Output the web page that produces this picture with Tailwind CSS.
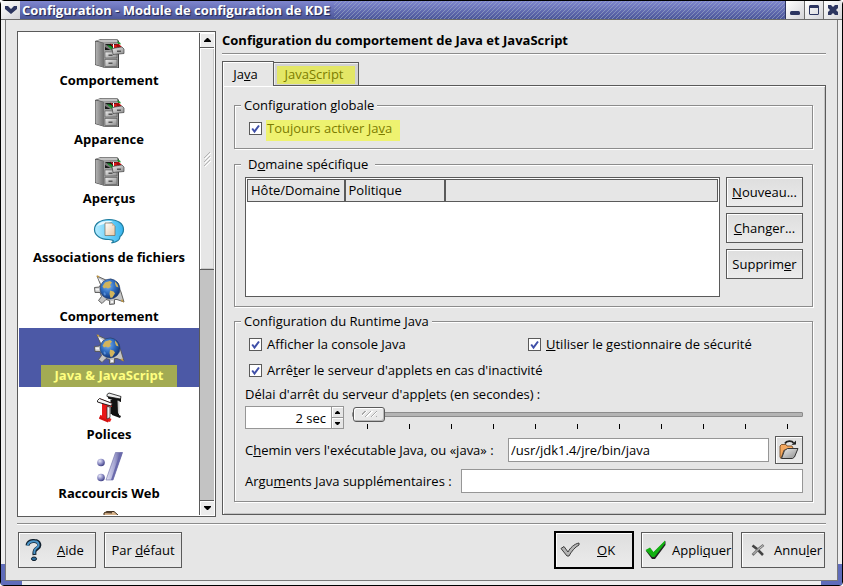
<!DOCTYPE html>
<html lang="fr">
<head>
<meta charset="utf-8">
<title>Configuration - Module de configuration de KDE</title>
<script src="https://cdn.jsdelivr.net/npm/@tailwindcss/browser@4"></script>
</head>
<body class="h-screen overflow-hidden bg-white font-['Open_Sans','Noto_Sans',sans-serif] text-[13px] leading-4 text-black">
<svg class="absolute size-0" aria-hidden="true">
  <defs>
    <linearGradient id="side" x1="0" x2="1"><stop offset="0" stop-color="#b4b4b4"/><stop offset="1" stop-color="#6e6e6e"/></linearGradient>
    <linearGradient id="front" x1="0" x2="1" y1="0" y2="1"><stop offset="0" stop-color="#eee"/><stop offset="1" stop-color="#8c8c8c"/></linearGradient>
    <linearGradient id="bubble" x1="0" x2="1"><stop offset="0" stop-color="#b8ecff"/><stop offset=".5" stop-color="#6cd2fb"/><stop offset="1" stop-color="#38b4ee"/></linearGradient>
    <linearGradient id="page" x1="0" x2="1" y1="0" y2="1"><stop offset="0" stop-color="#fff"/><stop offset="1" stop-color="#e9c8a4"/></linearGradient>
    <radialGradient id="globe" cx=".4" cy=".35" r=".7"><stop offset="0" stop-color="#7db4ee"/><stop offset=".5" stop-color="#2f6cc0"/><stop offset="1" stop-color="#0d2c6a"/></radialGradient>
    <linearGradient id="slash" x1="0" x2="1"><stop offset="0" stop-color="#e4e4f4"/><stop offset=".5" stop-color="#a8a8d4"/><stop offset="1" stop-color="#4a4a90"/></linearGradient>
    <radialGradient id="ball" cx=".35" cy=".3" r=".8"><stop offset="0" stop-color="#e8e8f8"/><stop offset=".5" stop-color="#8c8cc4"/><stop offset="1" stop-color="#2c2c74"/></radialGradient>
    <pattern id="stripes" width="4" height="4" patternUnits="userSpaceOnUse"><path d="M3 0h1v1h-1zM2 1h1v1h-1zM1 2h1v1h-1zM0 3h1v1h-1z" fill="#a4b4c8" fill-opacity=".55" shape-rendering="crispEdges"/></pattern>
  </defs>
  <symbol id="cabinet" viewBox="0 0 32 32">
    <path d="M2 3 L8 1 L24 1 L26 3 L26 30 L12 30 L2 27Z" fill="#444"/>
    <path d="M2.500 3.500 L11 5 L11 29.500 L2.500 26.500Z" fill="url(#side)"/>
    <path d="M3 2.800 L8.500 1.500 L24 1.500 L25 4.500 L11 4.800Z" fill="#c2c2c2"/>
    <path d="M11 5 H25 V29.500 H11Z" fill="#a0a0a0"/>
    <path d="M12 6 H24 V12 H12Z" fill="#181818"/>
    <rect x="12" y="14" width="12" height="6" fill="url(#front)" stroke="#555" stroke-width=".6"/>
    <rect x="12" y="21.500" width="12" height="7" fill="url(#front)" stroke="#555" stroke-width=".6"/>
    <path d="M15.500 16.500h4v1.500h-4zM15.500 24.500h4v1.500h-4z" fill="#555"/>
    <path d="M12 6l9 6v2l-9-5z" fill="#777"/>
    <path d="M17 5l3 2 6-1 3 3-8 1z" fill="#e11a1a"/>
    <path d="M14 7l4 1 3 3-2 1zM24 3.500l3 1 1 2-3-1z" fill="#159c28"/>
    <path d="M23 6l3 .5 2 2.500-4 .5z" fill="#a00c0c"/>
    <path d="M20 6h1v4h-1z" fill="#fff"/>
    <path d="M19 10.500 L29 9 L31 11 L31 15.500 L20 16.500Z" fill="url(#front)" stroke="#444" stroke-width=".7"/>
    <path d="M24 12.500h4v1.500h-4z" fill="#555"/>
  </symbol>
  <symbol id="speech" viewBox="0 0 32 32">
    <path d="M16 4.500C7.500 4.500 1.500 8.800 1.500 14.500S7.500 24.500 16 24.500C20 25 22 25.500 18.500 28C24 27 27 24.500 27 21.500C29.500 19.500 30.500 17 30.500 14.500C30.500 8.800 24.500 4.500 16 4.500Z" fill="url(#bubble)" stroke="#1f7c9e" stroke-width="1.200"/>
    <path d="M4 11C7 6 14 5.500 20 6.500L13 8.500Z" fill="#e4f8ff"/>
    <path d="M12 8h7l3 3v9.500H12z" fill="url(#page)" stroke="#7a6a58" stroke-width=".7"/>
    <path d="M19 8v3h3z" fill="#d8c4ae"/>
  </symbol>
  <symbol id="gearglobe" viewBox="0 0 32 32">
    <path d="M4 2L14 6.500 18 5 21 7 25 9 26 14 28 18 31 28 24 25.500 21.500 25.500 21.500 30 16.500 30.500 16.500 26.500 13 25.500 9 29.500 5.500 26.500 8.500 22.500 7 18.500 2 18.500 1.500 13.500 6.500 13 7.500 10.500Z" fill="#c4c4c4" stroke="#555" stroke-width=".9"/>
    <path d="M5 4l5 3-1.500 3zM2.500 14.500h4v2h-4zM18 27h2v2h-2z" fill="#f4f4f4"/>
    <path d="M3.500 1.500l3 .5-1.500 2zM29 25l2 3.500-3-1.500z" fill="#c89a3c"/>
    <circle cx="17" cy="15" r="10" fill="url(#globe)" stroke="#223a6a" stroke-width=".6"/>
    <path d="M12 8.500l5-1.500 2 1.500-2 2.500 1 2-3 1.500-2-1-2 1-1.500-2zM17 16.500l3.500 1 1.500 2-2.500 4-2 .5-1-4zM22 7.500l2.500 3 1 3-2.500-1-1-3z" fill="#d2b45c"/>
    <path d="M11 18l2 2-1 2-1.500-2z" fill="#5a8fd6"/>
  </symbol>
  <symbol id="fonts" viewBox="0 0 32 32">
    <path d="M15 2.500L28 5.500 28 10 26 9.500V23l2 1-1 2-8-3v-3l2 .5V8.500L15 6.500Z" fill="#111"/>
    <path d="M17.500 8h6v15l-6-1z" fill="#111"/>
    <path d="M14 2.500L16 1 28 4.500 27.500 7 14 4.500Z" fill="#eee" stroke="#111" stroke-width=".8"/>
    <path d="M24.500 8.500l2 .5v13l-1.500-.5z" fill="#ccc"/>
    <path d="M5 8L7 6.500 19 11V15L16.500 14V26l2 1-1.500 3-10-4v-3l2 .5V11.500L5 10Z" fill="#e81818"/>
    <path d="M4.500 8.500L6.500 6.500 19.500 11.500 18 14 4.500 10Z" fill="#f4f4f4" stroke="#111" stroke-width=".9"/>
    <path d="M14 14.500l3 .5V25.500l-3 1.500z" fill="#f2f2f2" stroke="#222" stroke-width=".7"/>
    <path d="M6.500 24.500l9.500 4-1 2-9-3.800z" fill="#d21010"/>
  </symbol>
  <symbol id="webkeys" viewBox="0 0 32 32">
    <path d="M22.500 1.500H29.500L20 29H13Z" fill="url(#slash)" stroke="#6a6aa4" stroke-width=".6"/>
    <path d="M27 1.500h2.500L20 29h-2z" fill="#6a6aac"/>
    <circle cx="8" cy="11.500" r="3.800" fill="url(#ball)"/><circle cx="8" cy="26.500" r="3.800" fill="url(#ball)"/>
  </symbol>
  <symbol id="tick" viewBox="0 0 13 13"><path d="M3.200 6.500L5.500 9.500L10 3.500" fill="none" stroke="#3f4fa8" stroke-width="2"/></symbol>
</svg>

<div class="relative flex h-full flex-col rounded-sm border border-black bg-[#eeeeee]">
  <header class="relative z-10 flex h-[19px] shrink-0 items-stretch overflow-hidden border-b border-[#6b6b6b] bg-linear-to-b from-[#7f86cf] to-[#4b5699]">
    <button aria-label="Menu de la fenêtre" class="grid w-[19px] shrink-0 place-items-center bg-linear-to-br from-white to-[#d4d4d8]">
      <svg class="h-2 w-3" viewBox="0 0 12 8"><path d="M0 0H3L6 3L9 0H12V3L6 8L0 3Z" fill="#2c3560"/></svg>
    </button>
    <h1 class="pr-1 pl-[2px] leading-[18px] font-bold whitespace-nowrap text-white [text-shadow:1px_1px_1px_#1c2450]">Configuration - Module de configuration de KDE</h1>
    <svg class="h-full min-w-0 flex-1" aria-hidden="true"><rect width="100%" height="100%" fill="url(#stripes)"/></svg>
    <div class="flex gap-px border-l border-[#2c3560] bg-[#6b6b6b]">
      <button aria-label="Réduire" class="grid w-[18px] place-items-center bg-linear-to-br from-white to-[#d4d4d8]"><svg class="size-3" viewBox="0 0 12 12"><rect x="1" y="7" width="10" height="4" rx="1.500" fill="#2c3560"/></svg></button>
      <button aria-label="Agrandir" class="grid w-[18px] place-items-center bg-linear-to-br from-white to-[#d4d4d8]"><svg class="size-3" viewBox="0 0 12 12"><path d="M2 1H10L11 2V10L10 11H2L1 10V2ZM2 4V10H10V4Z" fill="#2c3560" fill-rule="evenodd"/></svg></button>
      <button aria-label="Fermer" class="grid w-[18px] place-items-center bg-linear-to-br from-white to-[#d4d4d8]"><svg class="size-3" viewBox="0 0 12 12"><path d="M1 1H4L6 3L8 1H11V4L9 6L11 8V11H8L6 9L4 11H1V8L3 6L1 4Z" fill="#2c3560"/></svg></button>
    </div>
  </header>
  <div class="absolute bottom-0 left-0 size-[21px] bg-[#5f6cba]"></div>
  <div class="absolute right-0 bottom-0 size-[21px] bg-[#5f6cba]"></div>

  <div class="relative mx-1 mb-1 flex min-h-0 flex-1 flex-col border border-t-0 border-[#7a7a7a] bg-[#e6e6e6] p-[11px]">
    <main class="flex min-h-0 flex-1 gap-[6px]">
      <nav aria-label="Modules" class="flex w-[199px] shrink-0 border border-[#5a5a5a] bg-white p-px">
        <ul class="min-w-0 flex-1 overflow-hidden font-bold">
          <li><button class="flex h-[59px] w-full flex-col items-center pt-[5px]"><svg class="size-8"><use href="#cabinet"/></svg><span class="mt-[2px]">Comportement</span></button></li>
          <li><button class="flex h-[59px] w-full flex-col items-center pt-[5px]"><svg class="size-8"><use href="#cabinet"/></svg><span class="mt-[2px]">Apparence</span></button></li>
          <li><button class="flex h-[59px] w-full flex-col items-center pt-[5px]"><svg class="size-8"><use href="#cabinet"/></svg><span class="mt-[2px]">Aperçus</span></button></li>
          <li><button class="flex h-[59px] w-full flex-col items-center pt-[5px]"><svg class="size-8"><use href="#speech"/></svg><span class="mt-[2px]">Associations de fichiers</span></button></li>
          <li><button class="flex h-[59px] w-full flex-col items-center pt-[5px]"><svg class="size-8"><use href="#gearglobe"/></svg><span class="mt-[2px]">Comportement</span></button></li>
          <li><button aria-current="true" class="flex h-[59px] w-full flex-col items-center bg-[#4c59a6] pt-[5px]"><svg class="size-8 shrink-0"><use href="#gearglobe"/></svg><span class="w-[136px] bg-[#a3ab53] pt-[2px] pb-1 text-[#ffff80]">Java &amp; JavaScript</span></button></li>
          <li><button class="flex h-[59px] w-full flex-col items-center pt-[5px]"><svg class="size-8"><use href="#fonts"/></svg><span class="mt-[2px]">Polices</span></button></li>
          <li><button class="flex h-[59px] w-full flex-col items-center pt-[5px]"><svg class="size-8"><use href="#webkeys"/></svg><span class="mt-[2px]">Raccourcis Web</span></button></li>
          <li><button aria-label="Module suivant" class="flex h-[59px] w-full flex-col items-center pt-[5px]"><svg class="size-8" viewBox="0 0 32 32"><path d="M11 3L14 1.500H21L25 5V14H11Z" fill="#d8b48c" stroke="#3c2c1c"/><path d="M11 3L14 1.500H19V3.500Z" fill="#5a4632"/></svg></button></li>
        </ul>
        <div class="flex w-[15px] shrink-0 flex-col border-l border-[#5a5a5a] bg-[#c3c3c3]">
          <button aria-label="Défiler vers le haut" class="grid h-[15px] place-items-center border-b border-[#5a5a5a] bg-[#ebebeb] shadow-[inset_1px_1px_0_#fff]"><svg class="h-1 w-[7px]" viewBox="0 0 7 4"><path d="M3 0h1L7 3v1H0V3z"/></svg></button>
          <div class="grid h-[222px] place-items-center border-b border-[#5a5a5a] bg-[#e6e6e6] shadow-[inset_1px_1px_0_#fff,inset_-1px_-1px_0_#c8c8c8]"><svg class="h-4 w-2" viewBox="0 0 8 16" fill="none"><path d="M1 7L7 1M1 11L7 5M1 15L7 9" stroke="#b4b4b4"/><path d="M2 8L8 2M2 12L8 6M2 16L8 10" stroke="#fff"/></svg></div>
          <button aria-label="Défiler vers le bas" class="mt-auto grid h-[15px] place-items-center border-t border-[#5a5a5a] bg-[#ebebeb] shadow-[inset_1px_1px_0_#fff]"><svg class="h-1 w-[7px]" viewBox="0 0 7 4"><path d="M0 0h7v1L4 4H3L0 1z"/></svg></button>
        </div>
      </nav>

      <section class="flex min-w-0 flex-1 flex-col pb-[2px]">
        <h2 class="border-b border-[#8c8c8c] pb-1 leading-[18px] font-bold shadow-[0_1px_0_#fff]">Configuration du comportement de Java et JavaScript</h2>
        <div role="tablist" class="mt-[7px] flex h-6 items-end">
          <button role="tab" aria-selected="true" class="relative z-10 -mb-px h-[25px] w-[52px] border border-b-0 border-[#5a5a5a] bg-[#e6e6e6] pr-[5px] shadow-[inset_1px_1px_0_#fff]">Ja<u>v</u>a</button>
          <button role="tab" aria-selected="false" class="h-[23px] w-[85px] border border-b-0 border-l-0 border-[#5a5a5a] bg-[#d2d2d2] px-[3px] pt-[2px] shadow-[inset_1px_1px_0_#efefef]"><span class="block bg-[#e3e766] pr-1 pb-[2px] text-[#7c7c00]">Java<u>S</u>cript</span></button>
        </div>
        <div role="tabpanel" class="flex flex-1 flex-col gap-[6px] border border-[#5a5a5a] pt-[11px] pr-3 pb-3 pl-[11px] shadow-[inset_1px_1px_0_#fff,inset_-1px_-1px_0_#c4c4c4]">
          <fieldset class="border border-[#8c8c8c] pt-[7px] pr-[9px] pb-[7px] pl-[10px] shadow-[1px_1px_0_#fff,inset_1px_1px_0_#fff]">
            <legend class="-ml-1 bg-[#e6e6e6] px-[3px]">Configuration globale</legend>
            <label class="flex items-start gap-1 pl-1">
              <span class="grid pt-[2px]"><input type="checkbox" checked class="size-[13px] appearance-none border border-[#5a5a5a] bg-white [grid-area:1/1]"><svg class="pointer-events-none size-[13px] [grid-area:1/1]"><use href="#tick"/></svg></span>
              <span class="w-[134px] bg-[#eef270] pb-[5px] pl-px text-[#7c7c00]">Toujours activer Ja<u>v</u>a</span>
            </label>
          </fieldset>

          <fieldset class="mt-px border border-[#8c8c8c] pt-[5px] pr-[9px] pb-[9px] pl-[10px] shadow-[1px_1px_0_#fff,inset_1px_1px_0_#fff]">
            <legend class="-ml-1 bg-[#e6e6e6] px-[7px]">D<u>o</u>maine spécifique</legend>
            <div class="flex gap-[6px]">
              <div class="h-[120px] min-w-0 flex-1 border border-[#5a5a5a] bg-white p-px">
                <table class="w-full table-fixed border-collapse text-left">
                  <thead><tr class="h-[22px] bg-[#e6e6e6]">
                    <th class="w-[97px] border border-r-2 border-[#5a5a5a] px-[3px] pb-[2px] font-normal whitespace-nowrap">Hôte/Domaine</th>
                    <th class="w-[100px] border border-r-2 border-[#5a5a5a] px-[3px] pb-[2px] font-normal">Politique</th>
                    <th class="border border-[#5a5a5a]"></th>
                  </tr></thead>
                </table>
              </div>
              <div class="flex w-[77px] flex-col gap-[6px]">
                <button class="h-[30px] border border-[#5a5a5a] bg-linear-to-b from-[#dedede] to-[#ebebeb] shadow-[inset_1px_1px_0_#fff]"><u>N</u>ouveau...</button>
                <button class="h-[30px] border border-[#5a5a5a] bg-linear-to-b from-[#dedede] to-[#ebebeb] shadow-[inset_1px_1px_0_#fff]"><u>C</u>hanger...</button>
                <button class="h-[30px] border border-[#5a5a5a] bg-linear-to-b from-[#dedede] to-[#ebebeb] shadow-[inset_1px_1px_0_#fff]">Supprim<u>e</u>r</button>
              </div>
            </div>
          </fieldset>

          <fieldset class="border border-[#8c8c8c] pt-[5px] pr-[9px] pb-2 pl-[10px] shadow-[1px_1px_0_#fff,inset_1px_1px_0_#fff]">
            <legend class="-ml-1 bg-[#e6e6e6] px-[3px]">Configuration du Runtime Java</legend>
            <div class="grid grid-cols-2 gap-y-[6px]">
              <label class="flex h-5 items-center gap-[5px] pl-1">
                <span class="grid"><input type="checkbox" checked class="size-[13px] appearance-none border border-[#5a5a5a] bg-white [grid-area:1/1]"><svg class="pointer-events-none size-[13px] [grid-area:1/1]"><use href="#tick"/></svg></span>
                <span>Afficher la console <u>J</u>ava</span>
              </label>
              <label class="flex h-5 items-center gap-[5px] pl-1">
                <span class="grid"><input type="checkbox" checked class="size-[13px] appearance-none border border-[#5a5a5a] bg-white [grid-area:1/1]"><svg class="pointer-events-none size-[13px] [grid-area:1/1]"><use href="#tick"/></svg></span>
                <span><u>U</u>tiliser le gestionnaire de sécurité</span>
              </label>
              <label class="col-span-2 flex h-5 items-center gap-[5px] pl-1">
                <span class="grid"><input type="checkbox" checked class="size-[13px] appearance-none border border-[#5a5a5a] bg-white [grid-area:1/1]"><svg class="pointer-events-none size-[13px] [grid-area:1/1]"><use href="#tick"/></svg></span>
                <span>Arrê<u>t</u>er le serveur d'applets en cas d'inactivité</span>
              </label>
            </div>
            <label for="delay" class="mt-[6px] block">Délai d'arrêt du serveur d'app<u>l</u>ets (en secondes) :</label>
            <div class="mt-1 flex h-[23px] gap-2">
              <div class="flex w-[99px] shrink-0 border border-[#969696]">
                <input id="delay" type="text" value="2 sec" class="w-0 min-w-0 flex-1 bg-white pr-[5px] text-right">
                <div class="flex w-3 flex-col border-l border-[#969696]">
                  <button aria-label="Augmenter" class="grid flex-1 place-items-center border-b border-[#969696] shadow-[inset_1px_1px_0_#fff]"><svg class="h-[3px] w-[5px]" viewBox="0 0 5 3"><path d="M2 0h1L5 2v1H0V2z"/></svg></button>
                  <button aria-label="Diminuer" class="grid flex-1 place-items-center shadow-[inset_1px_1px_0_#fff]"><svg class="h-[3px] w-[5px]" viewBox="0 0 5 3"><path d="M0 0h5v1L3 3H2L0 1z"/></svg></button>
                </div>
              </div>
              <div class="flex min-w-0 flex-1 flex-col">
                <input type="range" aria-label="Délai d'arrêt" min="0" max="10" value="0" class="h-4 w-full appearance-none bg-transparent [&::-webkit-slider-runnable-track]:h-[5px] [&::-webkit-slider-runnable-track]:rounded-[1px] [&::-webkit-slider-runnable-track]:border [&::-webkit-slider-runnable-track]:border-[#8c8c8c] [&::-webkit-slider-runnable-track]:bg-[#b4b4b4] [&::-webkit-slider-thumb]:-mt-[6px] [&::-webkit-slider-thumb]:h-[15px] [&::-webkit-slider-thumb]:w-[32px] [&::-webkit-slider-thumb]:appearance-none [&::-webkit-slider-thumb]:rounded-[3px] [&::-webkit-slider-thumb]:border [&::-webkit-slider-thumb]:border-[#5a5a5a] [&::-webkit-slider-thumb]:bg-[#e8e8e8] [&::-webkit-slider-thumb]:bg-[repeating-linear-gradient(135deg,#e8e8e8_0px,#e8e8e8_2px,#a8a8a8_2px,#a8a8a8_3px,#ffffff_3px,#ffffff_4px)] [&::-webkit-slider-thumb]:bg-[length:15px_6px] [&::-webkit-slider-thumb]:bg-center [&::-webkit-slider-thumb]:bg-no-repeat [&::-webkit-slider-thumb]:shadow-[inset_1px_1px_0_#fff,inset_-1px_-1px_0_#b8b8b8]">
                <div aria-hidden="true" class="mt-[2px] mr-[15px] ml-[15px] flex h-[5px] justify-between">
                  <i class="w-px bg-black"></i><i class="w-px bg-black"></i><i class="w-px bg-black"></i><i class="w-px bg-black"></i><i class="w-px bg-black"></i><i class="w-px bg-black"></i><i class="w-px bg-black"></i><i class="w-px bg-black"></i><i class="w-px bg-black"></i><i class="w-px bg-black"></i><i class="w-px bg-black"></i>
                </div>
              </div>
            </div>
            <div class="mt-[7px] flex items-center gap-[6px]">
              <label for="path" class="w-[257px] shrink-0 whitespace-nowrap">C<u>h</u>emin vers l'exécutable Java, ou «java» :</label>
              <input id="path" type="text" value="/usr/jdk1.4/jre/bin/java" class="h-6 min-w-0 flex-1 border border-[#969696] bg-white px-[2px]">
              <button aria-label="Parcourir" class="grid size-7 shrink-0 place-items-center border border-[#5a5a5a] bg-linear-to-b from-[#dedede] to-[#ebebeb] shadow-[inset_1px_1px_0_#fff]">
                <svg class="size-[22px]" viewBox="0 0 22 22"><path d="M2 7L3.500 5.500H8L9 7H14L15 9V11H6L3 19.500L2 18Z" fill="#f4a860" stroke="#6a3c14" stroke-width=".8"/><path d="M6.500 11.500L9.500 9.500H20L16.500 18L14.500 19.500H3.500Z" fill="url(#front)" stroke="#333"/><path d="M7 4.500C8.500 1.500 14 1.500 15.500 4" fill="none" stroke="#222" stroke-width="1.800"/><path d="M13.500 6L18 5.500V1.500Z" fill="#222"/></svg>
              </button>
            </div>
            <div class="mt-[5px] flex items-center gap-[6px]">
              <label for="args" class="w-[210px] shrink-0 whitespace-nowrap">Argu<u>m</u>ents Java supplémentaires :</label>
              <input id="args" type="text" class="h-6 min-w-0 flex-1 border border-[#969696] bg-white px-[2px]">
            </div>
          </fieldset>
        </div>
      </section>
    </main>

    <footer class="mt-[6px] flex items-center border-t border-[#8c8c8c] px-px pt-[7px] shadow-[inset_0_1px_0_#fff]">
      <button class="flex h-9 w-[78px] items-center gap-3 border border-[#5a5a5a] bg-linear-to-b from-[#dedede] to-[#ebebeb] pl-[6px] shadow-[inset_1px_1px_0_#fff]">
        <svg class="h-[22px] w-5 shrink-0" viewBox="0 0 20 22"><path d="M2.500 6.500C3 2.500 7 1.800 9.500 2C14.500 2.200 16 7 12 9.500C9.500 11.200 9 12.500 9.500 16" fill="none" stroke="#10202e" stroke-width="4"/><path d="M2.500 6.500C3 3 7 2 9.500 2.300C14 2.500 15 7 11.500 9C9 10.800 9 12.500 9.500 15" fill="none" stroke="#4a94c8" stroke-width="2"/><ellipse cx="9" cy="19.800" rx="2.600" ry="1.800" fill="#2c6c9c" stroke="#10202e"/></svg>
        <span><u>A</u>ide</span>
      </button>
      <button class="ml-2 h-9 w-[78px] border border-[#5a5a5a] bg-linear-to-b from-[#dedede] to-[#ebebeb] shadow-[inset_1px_1px_0_#fff]">Par <u>d</u>éfaut</button>
      <button class="ml-auto flex h-[38px] w-20 items-center gap-[17px] border-2 border-black bg-linear-to-b from-[#dedede] to-[#ebebeb] pl-1 shadow-[inset_1px_1px_0_#fff]">
        <svg class="h-4 w-5 shrink-0" viewBox="0 0 20 16"><path d="M1 6.500L4 4.500L8 10C10 6 14 2 19 1L19 3C15 5 11 10 9 14H7Z" fill="#b4b4b4" stroke="#3c3c3c"/></svg>
        <span><u>O</u>K</span>
      </button>
      <button class="ml-[7px] flex h-9 w-[92px] items-center gap-[6px] border border-[#5a5a5a] bg-linear-to-b from-[#dedede] to-[#ebebeb] pl-[3px] shadow-[inset_1px_1px_0_#fff]">
        <svg class="h-5 w-[21px] shrink-0" viewBox="0 0 21 20"><path d="M1 11L5 8.500L8.500 12.500L20.500 1V5L10 19H7Z" fill="#222"/><path d="M.5 10L5 7.500L8.500 12L20 .5V3.500L9.500 17H7Z" fill="#12b012"/></svg>
        <span>Appli<u>q</u>uer</span>
      </button>
      <button class="ml-2 flex h-9 w-[84px] items-center gap-[9px] border border-[#5a5a5a] bg-linear-to-b from-[#dedede] to-[#ebebeb] pl-[9px] shadow-[inset_1px_1px_0_#fff]">
        <svg class="h-3 w-[14px] shrink-0" viewBox="0 0 14 12" fill="none"><path d="M1.500 1.500L6 5L12 11" stroke="#444" stroke-width="2.600"/><path d="M12.500 1L7 5.500L1.500 11" stroke="#777" stroke-width="2.600"/><path d="M12 1.500L7 5.500L2.500 10" stroke="#c4c4c4"/></svg>
        <span>Annu<u>l</u>er</span>
      </button>
    </footer>
  </div>
</div>
</body>
</html>
